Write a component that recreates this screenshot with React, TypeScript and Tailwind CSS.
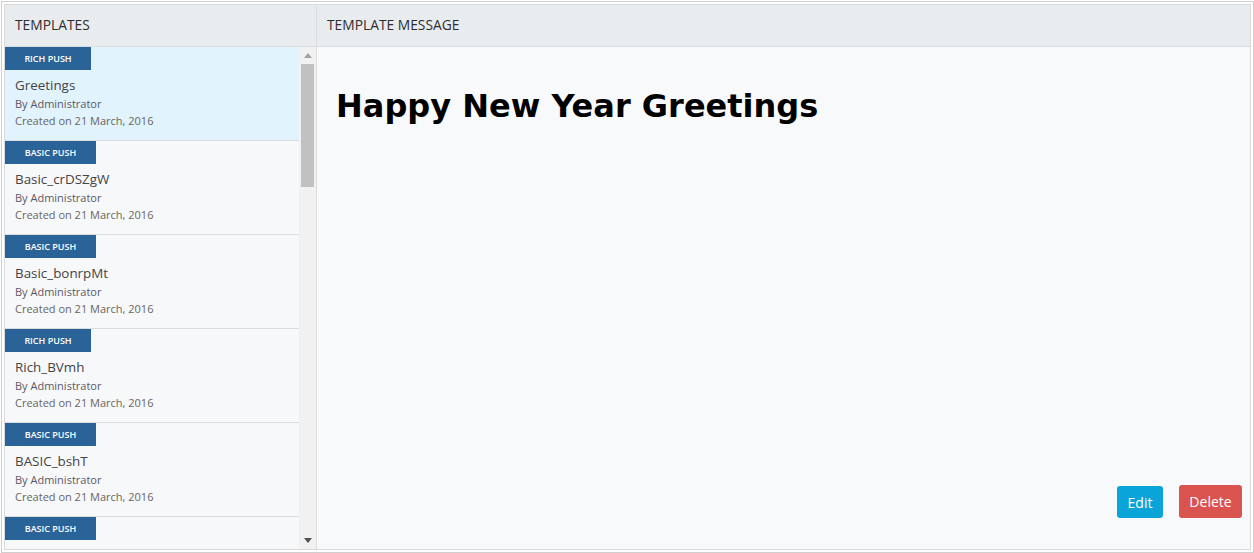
import React from "react";

type Item = { type: "RICH PUSH" | "BASIC PUSH"; name: string; active?: boolean; partial?: boolean };

const items: Item[] = [
  { type: "RICH PUSH", name: "Greetings", active: true },
  { type: "BASIC PUSH", name: "Basic_crDSZgW" },
  { type: "BASIC PUSH", name: "Basic_bonrpMt" },
  { type: "RICH PUSH", name: "Rich_BVmh" },
  { type: "BASIC PUSH", name: "BASIC_bshT" },
  { type: "BASIC PUSH", name: "", partial: true },
];

export default function App() {
  return (
    <div
      className="w-[1254px] h-[553px] bg-white pt-px pl-px overflow-hidden"
      style={{ fontFamily: '"Open Sans", "Noto Sans", sans-serif' }}
    >
      <div className="w-[1253px] h-[552px] border border-[#cfcfcf] p-[2px]">
        <div className="h-full border border-[#dadada] flex flex-col">
          {/* header */}
          <div className="h-[42px] flex bg-[#e8ecef] border-b border-[#d9dde0] shrink-0">
            <div className="w-[312px] border-r border-[#d9dde0] flex items-center pl-[10px] text-[13.8px] text-[#2d2d2d]">
              TEMPLATES
            </div>
            <div className="flex-1 flex items-center pl-[10px] text-[13.8px] text-[#2d2d2d]">
              TEMPLATE MESSAGE
            </div>
          </div>
          {/* body */}
          <div className="flex-1 flex min-h-0">
            <div className="w-[312px] border-r border-[#d9dde0] flex min-h-0">
              <div className="w-[294px] overflow-hidden">
                {items.map((it, i) => (
                  <div
                    key={i}
                    className={`h-[94px] border-b border-[#dcdcdc] ${
                      it.active ? "bg-[#e1f3fd]" : "bg-[#f7f8fa]"
                    }`}
                  >
                    <div
                      className={`h-[23px] bg-[#2a6398] text-white text-[9px] font-semibold flex items-center justify-center ${
                        it.type === "RICH PUSH" ? "w-[86px]" : "w-[91px]"
                      }`}
                    >
                      {it.type}
                    </div>
                    {!it.partial && (
                      <div className="pl-[10px] pt-[5px]">
                        <div className="text-[13.4px] leading-[20px] text-[#444]">{it.name}</div>
                        <div className="text-[11px] leading-[17px] text-[#5b5866]">By Administrator</div>
                        <div className="text-[11px] leading-[17px] text-[#6a6560]">Created on 21 March, 2016</div>
                      </div>
                    )}
                  </div>
                ))}
              </div>
              {/* scrollbar */}
              <div className="w-[17px] bg-[#f1f1f1] flex flex-col">
                <div className="h-[17px] flex items-center justify-center">
                  <svg width="8" height="5" viewBox="0 0 8 5">
                    <path d="M0 5 L4 0 L8 5 Z" fill="#a3a3a3" />
                  </svg>
                </div>
                <div className="mx-[2px] w-[13px] h-[123px] bg-[#c1c1c1]" />
                <div className="flex-1" />
                <div className="h-[17px] flex items-center justify-center">
                  <svg width="8" height="5" viewBox="0 0 8 5">
                    <path d="M0 0 L8 0 L4 5 Z" fill="#505050" />
                  </svg>
                </div>
              </div>
            </div>
            <div className="flex-1 bg-[#f8f9fb] flex flex-col pl-[19px] pr-[8px] pb-[31px]">
              <h1
                className="mt-[39px] text-[32px] leading-[40px] font-bold text-black"
                style={{ fontFamily: 'Verdana, "DejaVu Sans", sans-serif' }}
              >
                Happy New Year Greetings
              </h1>
              <div className="flex-1" />
              <div className="flex justify-end items-end gap-[16px]">
                <button className="h-[32px] w-[46px] rounded-[3px] bg-[#0ba4d9] text-white text-[14px]">
                  Edit
                </button>
                <button className="h-[33px] w-[63px] rounded-[3px] bg-[#d9534f] text-white text-[14px]">
                  Delete
                </button>
              </div>
            </div>
          </div>
        </div>
      </div>
    </div>
  );
}
